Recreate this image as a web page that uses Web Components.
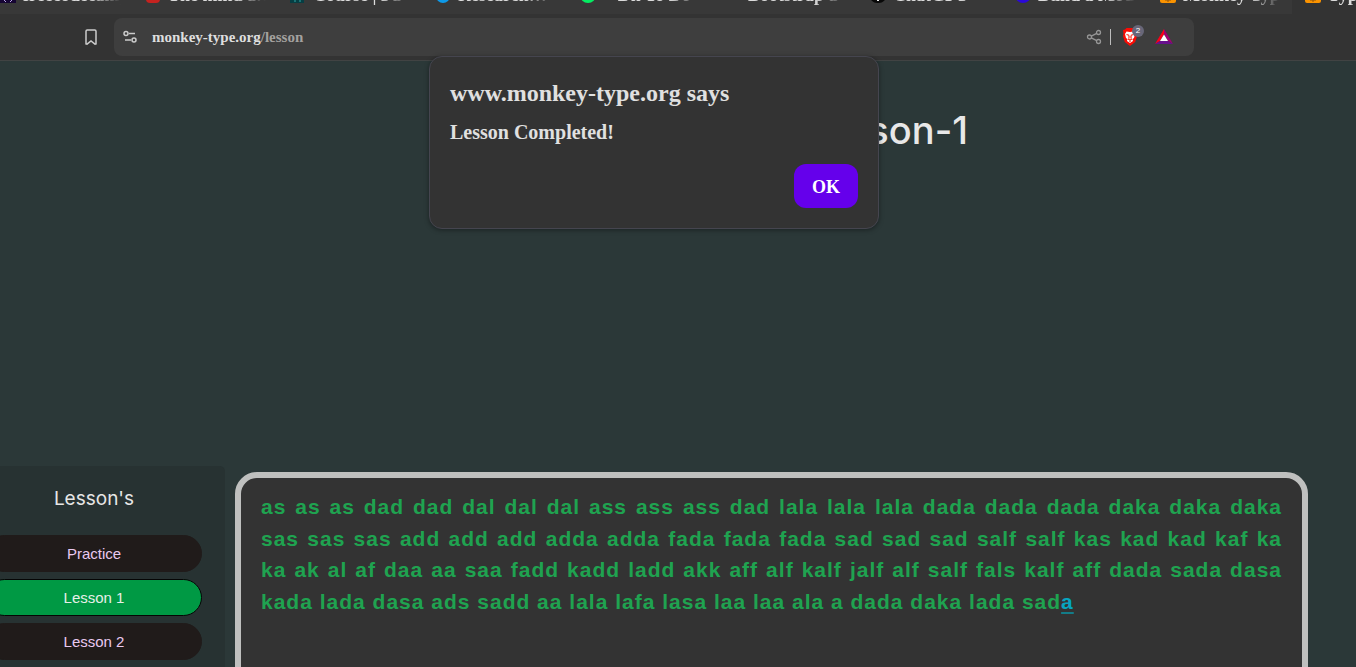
<!DOCTYPE html>
<html lang="en">
<head>
<meta charset="utf-8">
<title>Monkey Type - Lesson</title>
<style>
  body { margin: 0; background: #2b3838; font-family: "Liberation Sans", Arial, sans-serif; }
</style>
</head>
<body>
<lesson-app></lesson-app>
<script>
const define = (name, html) => customElements.define(name, class extends HTMLElement {
  constructor() {
    super();
    this.attachShadow({ mode: "open" }).innerHTML = html;
  }
});

define("browser-tab", `
<style>
  :host { display: flex; align-items: center; flex: 0 0 145px; box-sizing: border-box; height: 20px; gap: 7px; color: #dcdcdc; }
  .icon { flex: 0 0 16px; height: 16px; display: flex; }
  .title { flex: 0 0 98px; overflow: hidden; white-space: nowrap; font: bold 18px/20px "Liberation Serif", serif;
    -webkit-mask-image: linear-gradient(90deg, #000 68%, transparent); mask-image: linear-gradient(90deg, #000 68%, transparent); }
</style>
<span class="icon"><slot name="icon"></slot></span><span class="title"><slot></slot></span>`);

define("browser-tabs", `
<style>
  :host { display: flex; align-items: flex-end; height: 14px; padding-bottom: 9px; box-sizing: border-box; overflow: hidden;
    background: linear-gradient(90deg, #383838 0 1292px, #333 1292px); }
  browser-tab:first-child { margin-left: -1px; }
  svg { width: 16px; height: 16px; }
</style>
<browser-tab><svg slot="icon" viewBox="0 0 16 16"><path fill="#160533" d="M0 0h16v16H0z"/><path stroke="#b9a5e6" d="M4 13l2 2M12 13l-2 2"/></svg>freecodecamp</browser-tab>
<browser-tab><svg slot="icon" viewBox="0 0 16 16"><rect y="2" x="1" width="14" height="14" rx="4" fill="#c5221f"/></svg>The mind a…</browser-tab>
<browser-tab><svg slot="icon" viewBox="0 0 16 16"><rect width="14" height="16" fill="#073e43"/><path stroke="#2fa6a6" d="M4 14h2M9 14h2"/></svg>Course | Pa</browser-tab>
<browser-tab><svg slot="icon" viewBox="0 0 16 16"><circle cx="8" cy="9" r="7" fill="#0d99e8"/></svg>Research…</browser-tab>
<browser-tab><svg slot="icon" viewBox="0 0 16 16"><circle cx="8" cy="8" r="8" fill="#04ed62"/></svg>+ Dn To Do</browser-tab>
<browser-tab>Bootstrap a</browser-tab>
<browser-tab><svg slot="icon" viewBox="0 0 16 16"><rect width="16" height="16" rx="7" fill="#080808"/><path stroke="#eee" fill="none" d="M6 12l2 2 2-2"/></svg>ChatGPT</browser-tab>
<browser-tab><svg slot="icon" viewBox="0 0 16 16"><circle cx="8" cy="8" r="8" fill="#2a08d8"/></svg>Build a Mod</browser-tab>
<browser-tab><svg slot="icon" viewBox="0 0 16 16"><rect y="1" width="16" height="15" rx="2" fill="#fb9300"/><path stroke="#90540a" d="M5 13h6M8 12v3"/></svg>Monkey Typ</browser-tab>
<browser-tab><svg slot="icon" viewBox="0 0 16 16"><rect y="1" width="16" height="15" rx="2" fill="#fb9300"/><path stroke="#90540a" d="M5 13h6M8 12v3"/></svg>Typing</browser-tab>`);

define("browser-toolbar", `
<style>
  :host { display: flex; align-items: center; height: 47px; box-sizing: border-box; padding: 0 162px 1px 82px; background: #333; border-bottom: 1px solid #414343; }
  button { border: 0; padding: 0; background: none; display: flex; color: #cbcbcb; }
  svg { display: block; }
  .address { flex: 1; display: flex; align-items: center; height: 38px; border-radius: 8px; margin-left: 14px; padding: 0 21px 0 8px; background: #3e3e3e; }
  .url { flex: 1; margin-left: 14px; font: bold 15px/20px "Liberation Serif", serif; color: #a3a19e; text-decoration: none; }
  .url b { color: #dedede; }
  .line { width: 1px; height: 16px; background: #bdbdbd; margin: 0 11px 0 8px; }
  .shield { position: relative; }
  .badge { position: absolute; left: 10px; top: -3px; width: 12px; height: 12px; border-radius: 6px; background: #686779; color: #fff; font: 8px/12px "Liberation Sans", sans-serif; text-align: center; }
  .rewards { margin-left: 17px; }
</style>
<button aria-label="Bookmark"><svg width="18" height="18" viewBox="0 0 18 18" fill="none" stroke="currentColor" stroke-width="1.5"><path d="M4 3.2Q4 2 5.2 2h7.6Q14 2 14 3.2V16l-1 .2L9 13l-4 3.2L4 16z"/></svg></button>
<div class="address">
  <button aria-label="Site settings"><svg width="16" height="16" viewBox="0 0 16 16" fill="none" stroke="currentColor" stroke-width="1.5"><circle cx="4" cy="4.5" r="2"/><path d="M7 4.5h6M3 11h6"/><circle cx="12" cy="11" r="2"/></svg></button>
  <a class="url" href="#"><b>monkey-type.org</b>/lesson</a>
  <button aria-label="Share"><svg width="16" height="16" viewBox="0 0 16 16" fill="none" stroke="#969696" stroke-width="1.3"><circle cx="3.500" cy="8" r="2"/><circle cx="12.500" cy="3.500" r="2"/><circle cx="12.500" cy="12.500" r="2"/><path d="M5.300 7.100l5.400-2.700M5.300 8.900l5.400 2.700"/></svg></button>
  <span class="line"></span>
  <button class="shield" aria-label="Shields"><svg width="16" height="18" viewBox="0 0 16 18"><path fill="#fb0b04" d="M4.500 0h7l1.500 1.500L15 2l-.5 4 .5 2-1.800 6L8 18l-5.200-4L1 8l.5-2L1 2l2-.5z"/><path fill="#fff" d="M4.500 3.500L8 4l3.500-.5L13 6l-1 4-1.500 1 .5 2-3 2-3-2 .5-2L4 10 3 6z"/><path stroke="#fb2a18" stroke-width="1.200" fill="none" d="M4.500 6.500l2.500.8M11.500 6.500L9 7.300M7 7.500v3M9 7.500v3M6 11l2 1 2-1M8 12v2"/></svg><span class="badge">2</span></button>
  <button class="rewards" aria-label="Rewards"><svg width="18" height="16" viewBox="0 0 18 16"><path fill="#fb0018" d="M9 0L0 15l5-3 4-7z"/><path fill="#a00070" d="M9 0v5l4 7 5 3z"/><path fill="#67108d" d="M0 15l5-3h8l5 3z"/><path fill="#fff" d="M9 5.500L5 12h8z"/></svg></button>
</div>`);

define("alert-dialog", `
<style>
  :host { display: block; width: 450px; box-sizing: border-box; padding: 20px; border: 1px solid #45454f; border-radius: 13px; background: #333; box-shadow: 0 1px 5px #0006; font-family: "Liberation Serif", serif; color: #e0e0e0; }
  h2 { margin: 0; font-size: 24px; line-height: 32px; font-weight: bold; white-space: nowrap; }
  p { margin: 9px 0 18px; font-size: 20px; line-height: 28px; font-weight: bold; }
  footer { display: flex; justify-content: flex-end; }
  button { width: 64px; height: 44px; padding: 1px 0 0; border: 0; border-radius: 12px; background: #6500eb; color: #fff; font: bold 18px/24px "Liberation Serif", serif; }
</style>
<h2><slot name="title"></slot></h2>
<p><slot></slot></p>
<footer><button>OK</button></footer>`);

define("lesson-button", `
<style>
  :host { display: block; }
  button { display: block; width: 100%; height: 37px; padding: 0; border: 1px solid #201b1a; border-radius: 19px; background: #201b1a; color: #e9c9f0; font: 15px/20px "Liberation Sans", Arial, sans-serif; }
  :host([active]) button { background: #009944; border-color: #050505; color: #e6efe8; }
</style>
<button><slot></slot></button>`);

define("lesson-sidebar", `
<style>
  :host { display: block; flex: 0 0 262px; box-sizing: border-box; margin-left: -37px; padding: 19px 23px; border-radius: 5px; background: #273232; }
  h2 { margin: 0 0 22px; font: 400 19px/28px Inter, sans-serif; color: #e6e6e6; text-align: center; }
  nav { display: grid; gap: 7px; }
</style>
<h2>Lesson's</h2>
<nav>
  <lesson-button>Practice</lesson-button>
  <lesson-button active>Lesson 1</lesson-button>
  <lesson-button>Lesson 2</lesson-button>
</nav>`);

define("typing-box", `
<style>
  :host { display: block; flex: 1; box-sizing: border-box; min-height: 300px; border: 6px solid #bfc0bf; border-radius: 22px; padding: 13px 20px; background: #333; }
  p { margin: 0; font: bold 21px/1.5 "Liberation Sans", Arial, sans-serif; letter-spacing: 1px; text-align: justify; color: #1fa350; }
  u { color: #06a5c0; text-decoration-color: #137c88; text-underline-offset: 3px; text-decoration-thickness: 2px; }
</style>
<p>as as as dad dad dal dal dal ass ass ass dad lala lala lala dada dada dada daka daka daka sas sas sas add add add adda adda fada fada fada sad sad sad salf salf kas kad kad kaf ka ka ak al af daa aa saa fadd kadd ladd akk aff alf kalf jalf alf salf fals kalf aff dada sada dasa kada lada dasa ads sadd aa lala lafa lasa laa laa ala a dada daka lada sad<u>a</u></p>`);

define("lesson-app", `
<style>
  :host { display: block; position: relative; height: 100vh; overflow: hidden; background: #2b3838; }
  h1 { margin: 0; padding: 44px 388px 311px 0; text-align: right; font: 500 38px/50px Inter, sans-serif; color: #e8e8e8; }
  main { display: flex; gap: 10px; padding-right: 48px; }
  typing-box { margin-top: 6px; }
  alert-dialog { position: absolute; top: 56px; left: calc(50% - 249px); }
</style>
<browser-tabs></browser-tabs>
<browser-toolbar></browser-toolbar>
<h1>Lesson-1</h1>
<main>
  <lesson-sidebar></lesson-sidebar>
  <typing-box></typing-box>
</main>
<alert-dialog role="alertdialog"><span slot="title">www.monkey-type.org says</span>Lesson Completed!</alert-dialog>`);
</script>
</body>
</html>
